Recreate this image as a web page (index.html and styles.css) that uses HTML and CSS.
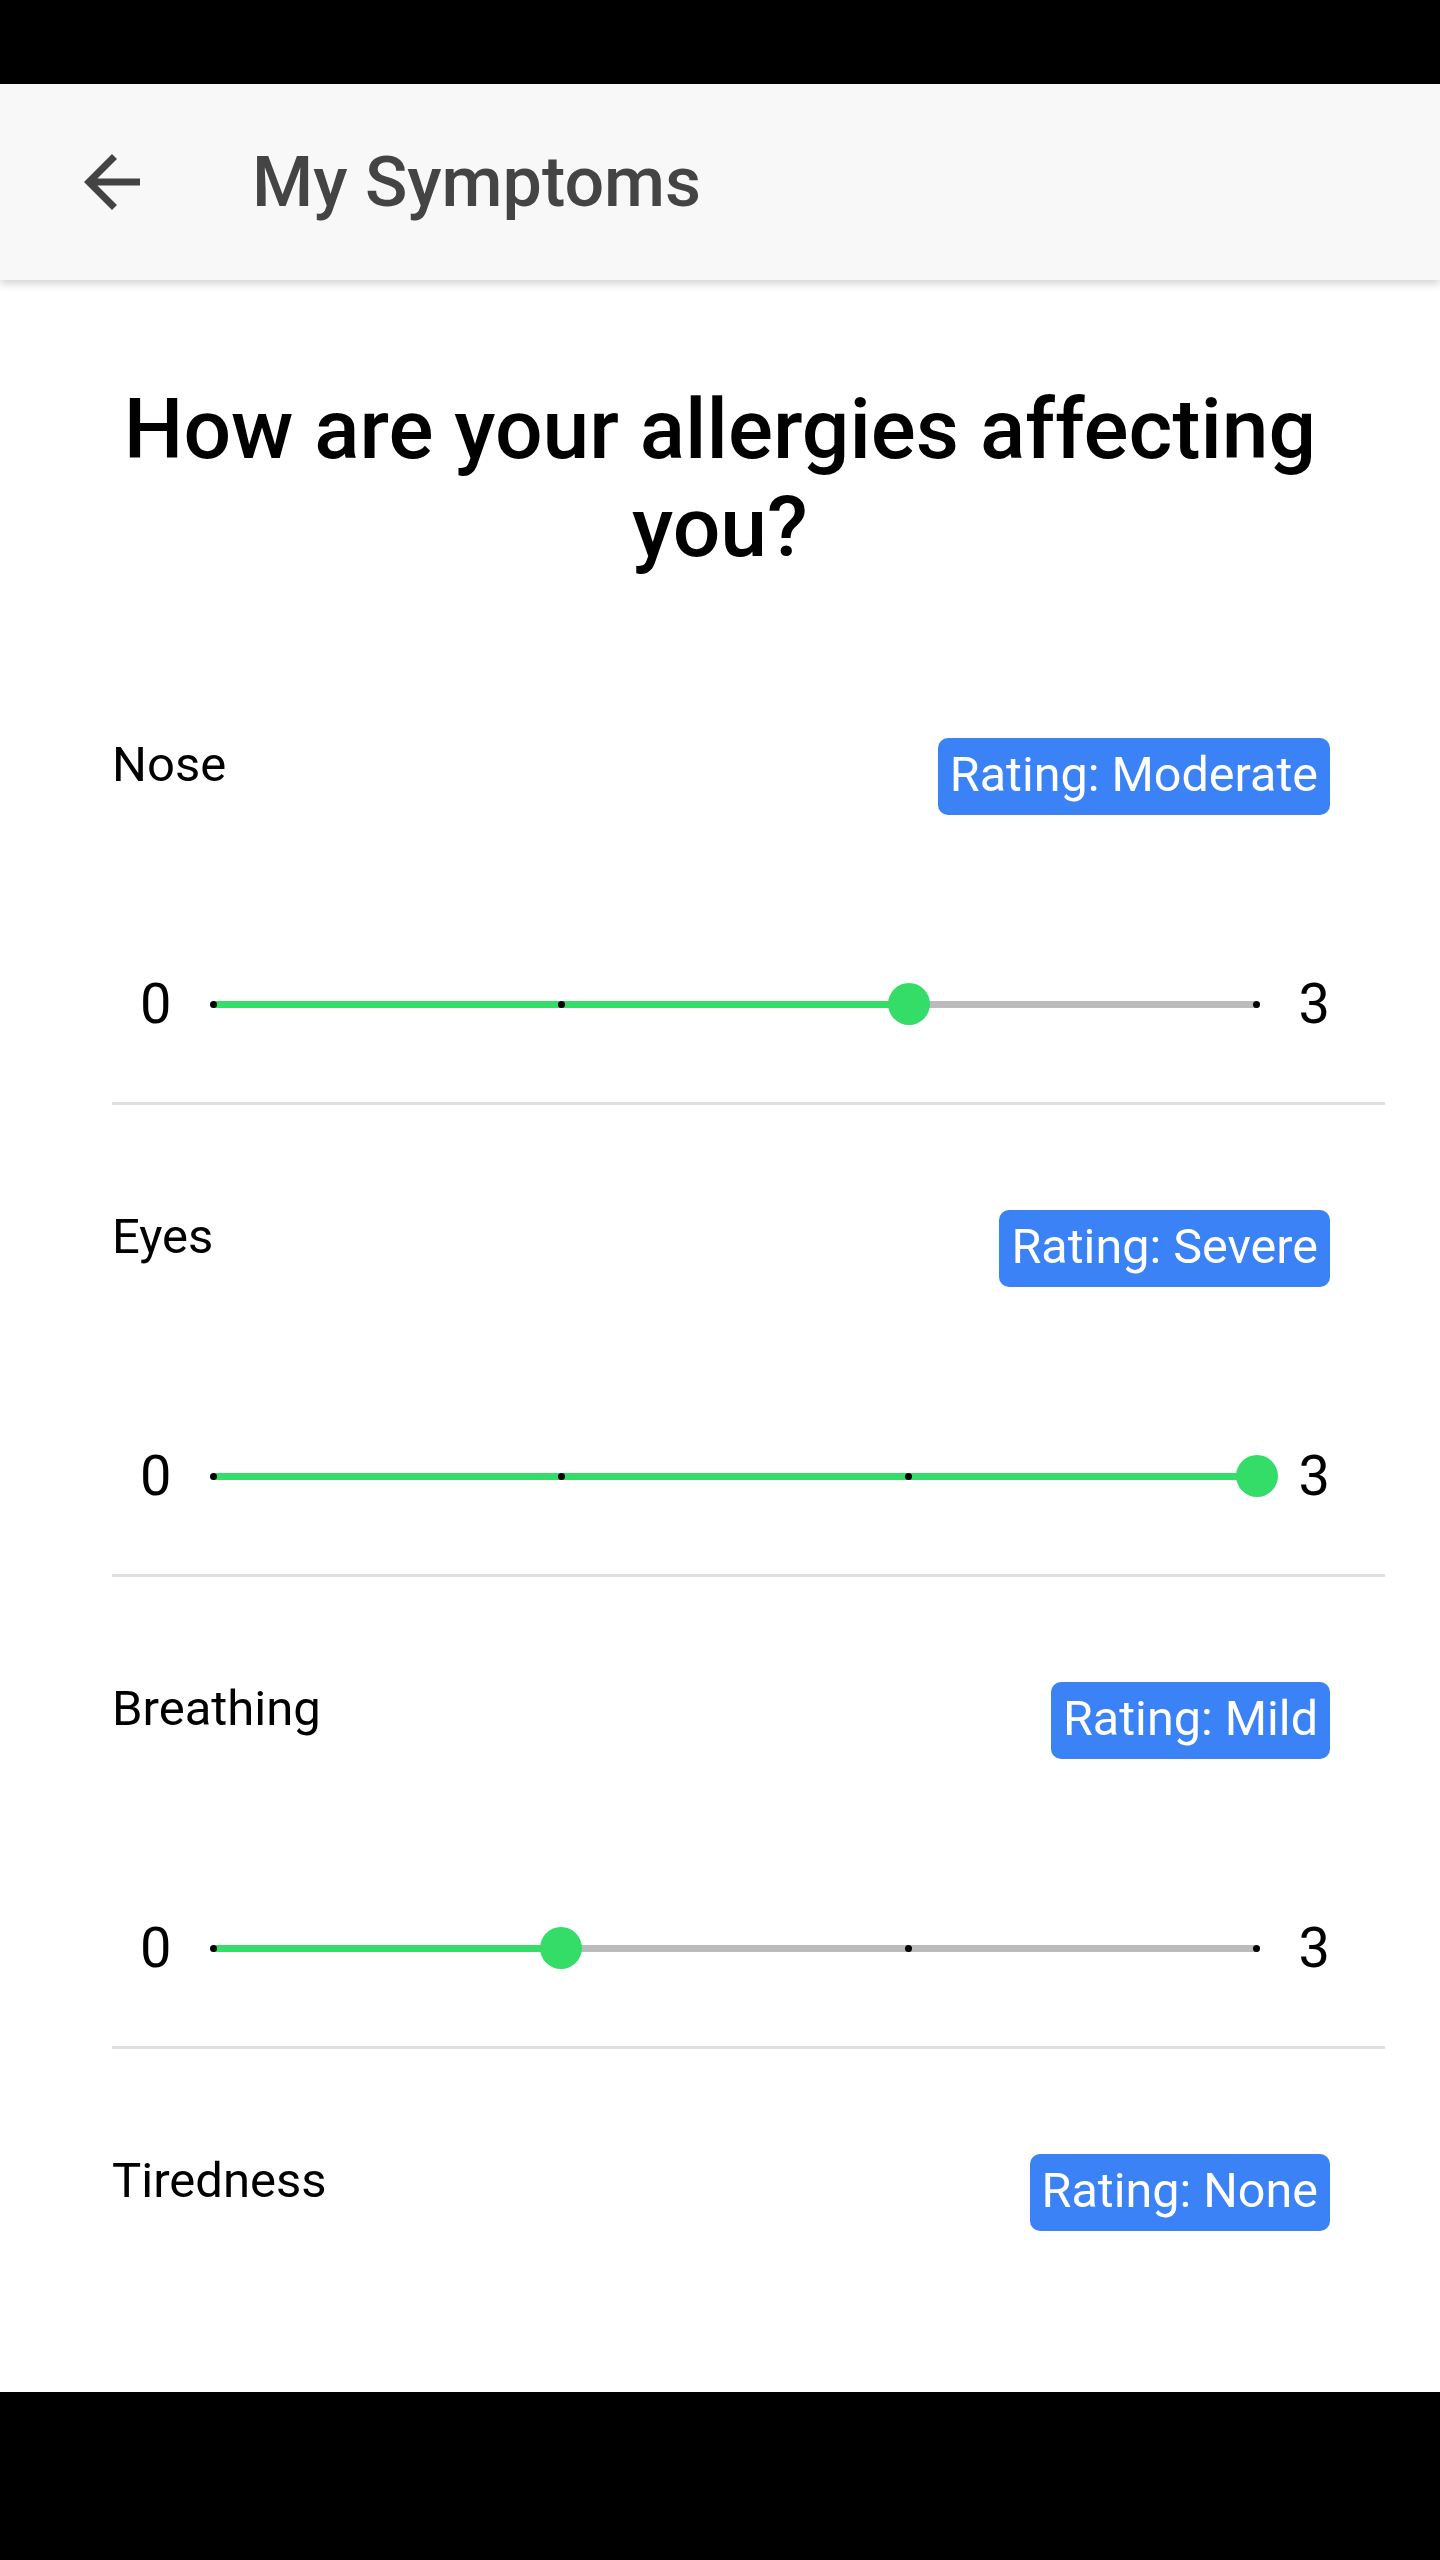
FILE: index.html
```html
<!DOCTYPE html>
<html lang="en">
<head>
<meta charset="utf-8">
<title>My Symptoms</title>
<link rel="stylesheet" href="styles.css">
</head>
<body>
<div class="screen">
  <div class="statusbar"></div>
  <header class="appbar">
    <svg class="back" viewBox="0 0 24 24" aria-hidden="true"><path d="M20 11H7.83l5.59-5.59L12 4l-8 8 8 8 1.41-1.41L7.83 13H20v-2z"/></svg>
    <h1 class="appbar-title">My Symptoms</h1>
  </header>
  <main class="content">
    <h2 class="question">How are your allergies affecting you?</h2>
    <div class="symptoms">
      <section class="symptom">
        <div class="symptom-head"><span class="symptom-name">Nose</span><span class="badge">Rating: Moderate</span></div>
        <div class="scale">
          <span class="scale-num">0</span>
          <div class="slider"><div class="track"><div class="fill" style="width:66.667%"></div><div class="ticks"><i></i><i></i><i></i><i></i></div><div class="thumb" style="left:66.667%"></div></div></div>
          <span class="scale-num">3</span>
        </div>
        <div class="divider"></div>
      </section>
      <section class="symptom">
        <div class="symptom-head"><span class="symptom-name">Eyes</span><span class="badge">Rating: Severe</span></div>
        <div class="scale">
          <span class="scale-num">0</span>
          <div class="slider"><div class="track"><div class="fill" style="width:100%"></div><div class="ticks"><i></i><i></i><i></i><i></i></div><div class="thumb" style="left:100%"></div></div></div>
          <span class="scale-num">3</span>
        </div>
        <div class="divider"></div>
      </section>
      <section class="symptom">
        <div class="symptom-head"><span class="symptom-name">Breathing</span><span class="badge">Rating: Mild</span></div>
        <div class="scale">
          <span class="scale-num">0</span>
          <div class="slider"><div class="track"><div class="fill" style="width:33.333%"></div><div class="ticks"><i></i><i></i><i></i><i></i></div><div class="thumb" style="left:33.333%"></div></div></div>
          <span class="scale-num">3</span>
        </div>
        <div class="divider"></div>
      </section>
      <section class="symptom">
        <div class="symptom-head"><span class="symptom-name">Tiredness</span><span class="badge">Rating: None</span></div>
      </section>
    </div>
  </main>
  <div class="navbar"></div>
</div>
</body>
</html>
```
FILE: styles.css
```css
* { box-sizing: border-box; }
html, body { margin: 0; padding: 0; background: #ffffff; }
body { font-family: Roboto, "Liberation Sans", Arial, sans-serif; color: #000; }

.screen {
  width: 1440px;
  height: 2560px;
  display: flex;
  flex-direction: column;
  overflow: hidden;
}

.statusbar { height: 84px; flex: 0 0 84px; background: #000; }
.navbar { height: 168px; flex: 0 0 168px; background: #000; }

.appbar {
  flex: 0 0 196px;
  height: 196px;
  background: #f8f8f8;
  display: flex;
  align-items: center;
  position: relative;
  z-index: 2;
  box-shadow: 0 3px 9px rgba(0, 0, 0, 0.2);
}
.back {
  width: 84px;
  height: 84px;
  margin-left: 70px;
  fill: #434343;
  flex: 0 0 84px;
}
.appbar-title {
  margin: 0 0 0 98px;
  font-size: 70px;
  font-weight: 500;
  color: #444444;
  line-height: 82px;
  letter-spacing: 0;
}

.content {
  flex: 1 1 auto;
  overflow: hidden;
  padding-top: 101px;
}

.question {
  margin: 0;
  padding: 0 56px;
  text-align: center;
  font-size: 84px;
  line-height: 98px;
  font-weight: 500;
  color: #000;
}

.symptoms {
  margin-top: 159px;
  padding: 0 55px 0 112px;
}

.symptom { padding-bottom: 103px; }

.symptom-head {
  display: flex;
  justify-content: space-between;
  align-items: flex-start;
  margin-right: 55px;
}
.symptom-name {
  font-size: 49px;
  line-height: 57px;
  color: #000;
}
.badge {
  margin-top: 2px;
  background: #3b82f6;
  color: #fff;
  font-size: 48.5px;
  line-height: 57px;
  padding: 8px 12px 12px;
  border-radius: 10px;
}

.scale {
  margin-top: 156px;
  margin-right: 55px;
  height: 66px;
  display: flex;
  align-items: center;
  padding-left: 28px;
}
.scale-num {
  font-size: 56px;
  line-height: 66px;
  color: #000;
  flex: 0 0 auto;
}
.slider {
  flex: 1 1 auto;
  height: 42px;
  padding: 0 42px;
  display: flex;
  align-items: center;
}
.track {
  position: relative;
  width: 100%;
  height: 7px;
  background: #bbbbbb;
}
.fill {
  position: absolute;
  left: 0;
  top: 0;
  height: 100%;
  background: #34dc68;
}
.ticks {
  position: absolute;
  left: -3px;
  right: -3px;
  top: 0;
  height: 7px;
  display: flex;
  justify-content: space-between;
}
.ticks i {
  display: block;
  width: 7px;
  height: 7px;
  border-radius: 50%;
  background: #000;
}
.thumb {
  position: absolute;
  top: 50%;
  width: 42px;
  height: 42px;
  border-radius: 50%;
  background: #34dc68;
  transform: translate(-50%, -50%);
}

.divider {
  margin-top: 65px;
  height: 3px;
  background: #e0e0e0;
}
```
